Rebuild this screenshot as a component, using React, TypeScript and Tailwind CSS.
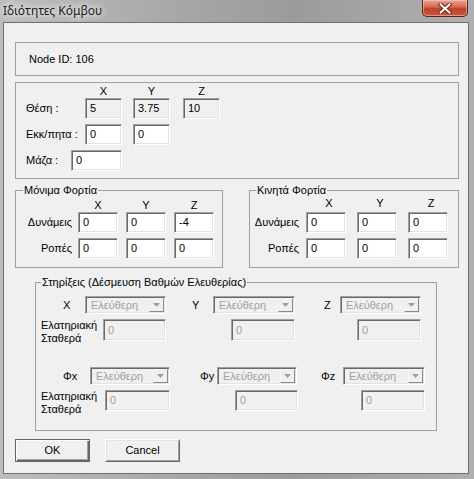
import type { ReactNode } from "react";

const SANS = "font-['Liberation_Sans',Arial,sans-serif]";

const SUNKEN =
  "border border-t-[#a0a0a0] border-l-[#a0a0a0] border-b-white border-r-white shadow-[inset_1px_1px_0_#696969,inset_-1px_-1px_0_#e3e3e3]";

function Field({
  value,
  className,
  tone = "white",
}: {
  value: string;
  className: string;
  tone?: "white" | "ro" | "off";
}) {
  const look =
    tone === "white"
      ? "bg-white text-black"
      : tone === "ro"
        ? "bg-[#f0f0f0] text-black"
        : "bg-[#f0f0f0] text-[#a0a0a0]";
  return (
    <div className={"flex shrink-0 items-center pl-[4px] " + SUNKEN + " " + look + " " + className}>
      {value}
    </div>
  );
}

function Combo({ className }: { className: string }) {
  return (
    <div className={"flex h-[18px] shrink-0 items-stretch bg-[#f0f0f0] p-[1px] " + SUNKEN + " " + className}>
      <span className="flex-1 pl-[4px] leading-[14px] text-[#a0a0a0]">Ελεύθερη</span>
      <span className="flex w-[15px] items-center justify-center border border-t-[#f4f4f4] border-l-[#f4f4f4] border-b-[#8a8a8a] border-r-[#8a8a8a] bg-[#f0f0f0]">
        <svg width="7" height="4" viewBox="0 0 7 4">
          <path d="M0 0 L7 0 L3.5 4 Z" fill="#a0a0a0" />
        </svg>
      </span>
    </div>
  );
}

function Group({
  title,
  className,
  legendClass,
  children,
}: {
  title: string;
  className: string;
  legendClass: string;
  children: ReactNode;
}) {
  return (
    <fieldset className={"m-0 shrink-0 border border-[#a0a0a0] p-0 " + className}>
      <legend className={"px-[1px] leading-[13px] " + legendClass}>{title}</legend>
      {children}
    </fieldset>
  );
}

function CloseButton() {
  return (
    <div className="mr-[6px] flex h-[17px] w-[46px] items-center justify-center rounded-b-[5px] border border-t-0 border-[#5e2418] bg-[linear-gradient(to_bottom,#e9a897,#d4644d_45%,#c0412a_55%,#c9573f)] shadow-[inset_0_0_0_1px_rgba(255,210,200,0.5)]">
      <svg width="14" height="11" viewBox="0 0 14 11">
        <path d="M2.5 1.5 L11.5 9.5 M11.5 1.5 L2.5 9.5" stroke="#6a2415" strokeWidth="4" strokeLinecap="square" />
        <path d="M2.5 1.5 L11.5 9.5 M11.5 1.5 L2.5 9.5" stroke="#ffffff" strokeWidth="2" strokeLinecap="square" />
      </svg>
    </div>
  );
}

export default function App() {
  return (
    <div
      className={
        "flex h-[479px] w-[474px] flex-col overflow-hidden bg-[linear-gradient(to_right,#bdbdbd,#a6a6a6_40%,#9b9b9b_62%,#b0b0b0)] text-[11px] text-black " +
        SANS
      }
    >
      {/* title bar */}
      <div className="flex h-[22px] shrink-0 items-start justify-between">
        <span className="ml-[3px] mt-[3px] font-['Noto_Sans','Open_Sans',sans-serif] text-[12px] leading-[16px] text-[#1b1b1b] [text-shadow:0_0_6px_#fff,0_0_10px_#fff]">
          Ιδιότητες Κόμβου
        </span>
        <CloseButton />
      </div>

      {/* client area */}
      <div className="ml-[3px] flex h-[452px] w-[466px] shrink-0 flex-col border border-[#6f6f6f] bg-[#f0f0f0]">
        <div className="ml-[11px] mt-[19px] flex h-[34px] w-[444px] shrink-0 items-center border border-[#a0a0a0] pl-[13px]">
          Node ID: 106
        </div>

        {/* position */}
        <div className="ml-[11px] mt-[6px] h-[97px] w-[444px] shrink-0 border border-[#a0a0a0]">
          <div className="mt-[2px] flex h-[13px] leading-[13px]">
            <span className="w-[69px] shrink-0" />
            <span className="w-[37px] text-center">X</span>
            <span className="ml-[11px] w-[37px] text-center">Y</span>
            <span className="ml-[13px] w-[37px] text-center">Z</span>
          </div>
          <div className="flex h-[21px] items-center">
            <span className="w-[69px] shrink-0 pl-[10px]">Θέση :</span>
            <Field value="5" tone="ro" className="h-[21px] w-[37px]" />
            <Field value="3.75" tone="ro" className="ml-[11px] h-[21px] w-[37px]" />
            <Field value="10" tone="ro" className="ml-[13px] h-[21px] w-[37px]" />
          </div>
          <div className="mt-[5px] flex h-[21px] items-center">
            <span className="w-[69px] shrink-0 pl-[10px]">Εκκ/πητα :</span>
            <Field value="0" className="h-[21px] w-[37px]" />
            <Field value="0" className="ml-[11px] h-[21px] w-[37px]" />
          </div>
          <div className="mt-[5px] flex h-[21px] items-center">
            <span className="w-[55px] shrink-0 pl-[10px]">Μάζα :</span>
            <Field value="0" className="h-[21px] w-[51px]" />
          </div>
        </div>

        {/* loads */}
        <div className="ml-[11px] mt-[5px] flex gap-[26px]">
          <Group title="Μόνιμα Φορτία" className="h-[84px] w-[208px]" legendClass="ml-[7px]">
            <div className="mt-[2px] flex h-[13px] leading-[13px]">
              <span className="w-[62px] shrink-0" />
              <span className="w-[40px] text-center">X</span>
              <span className="ml-[8px] w-[40px] text-center">Y</span>
              <span className="ml-[8px] w-[40px] text-center">Z</span>
            </div>
            <div className="flex h-[21px] items-center">
              <span className="w-[56px] shrink-0 text-right">Δυνάμεις</span>
              <Field value="0" className="ml-[6px] h-[21px] w-[40px]" />
              <Field value="0" className="ml-[8px] h-[21px] w-[40px]" />
              <Field value="-4" className="ml-[8px] h-[21px] w-[40px]" />
            </div>
            <div className="mt-[5px] flex h-[21px] items-center">
              <span className="w-[56px] shrink-0 text-right">Ροπές</span>
              <Field value="0" className="ml-[6px] h-[21px] w-[40px]" />
              <Field value="0" className="ml-[8px] h-[21px] w-[40px]" />
              <Field value="0" className="ml-[8px] h-[21px] w-[40px]" />
            </div>
          </Group>
          <Group title="Κινητά Φορτία" className="h-[84px] w-[210px]" legendClass="ml-[6px]">
            <div className="flex h-[13px] leading-[13px]">
              <span className="w-[56px] shrink-0" />
              <span className="w-[40px] pl-[6px] text-center">X</span>
              <span className="ml-[11px] w-[40px] pl-[6px] text-center">Y</span>
              <span className="ml-[11px] w-[40px] pl-[6px] text-center">Z</span>
            </div>
            <div className="mt-[2px] flex h-[21px] items-center">
              <span className="w-[49px] shrink-0 text-right">Δυνάμεις</span>
              <Field value="0" className="ml-[7px] h-[21px] w-[40px]" />
              <Field value="0" className="ml-[11px] h-[21px] w-[40px]" />
              <Field value="0" className="ml-[11px] h-[21px] w-[40px]" />
            </div>
            <div className="mt-[5px] flex h-[21px] items-center">
              <span className="w-[49px] shrink-0 text-right">Ροπές</span>
              <Field value="0" className="ml-[7px] h-[21px] w-[40px]" />
              <Field value="0" className="ml-[11px] h-[21px] w-[40px]" />
              <Field value="0" className="ml-[11px] h-[21px] w-[40px]" />
            </div>
          </Group>
        </div>

        {/* supports */}
        <Group
          title="Στηρίξεις (Δέσμευση Βαθμών Ελευθερίας)"
          className="ml-[31px] mt-[8px] h-[155px] w-[402px]"
          legendClass="ml-[5px]"
        >
          <div className="mt-[7px] flex h-[18px] items-center">
            <span className="ml-[27px] w-[22px] shrink-0">X</span>
            <Combo className="w-[81px]" />
            <span className="ml-[26px] w-[21px] shrink-0">Y</span>
            <Combo className="w-[82px]" />
            <span className="ml-[29px] w-[16px] shrink-0">Z</span>
            <Combo className="w-[81px]" />
          </div>
          <div className="mt-[5px] flex items-start">
            <span className="ml-[5px] w-[62px] shrink-0 leading-[13px]">
              Ελατηριακή
              <br />
              Σταθερά
            </span>
            <Field value="0" tone="off" className="h-[22px] w-[63px]" />
            <Field value="0" tone="off" className="ml-[65px] h-[22px] w-[64px]" />
            <Field value="0" tone="off" className="ml-[62px] h-[22px] w-[64px]" />
          </div>
          <div className="mt-[22px] flex h-[18px] items-center">
            <span className="ml-[27px] w-[27px] shrink-0">Φx</span>
            <Combo className="w-[80px]" />
            <span className="ml-[30px] w-[17px] shrink-0">Φy</span>
            <Combo className="w-[80px]" />
            <span className="ml-[24px] w-[22px] shrink-0">Φz</span>
            <Combo className="w-[82px]" />
          </div>
          <div className="mt-[5px] flex items-start">
            <span className="ml-[5px] w-[64px] shrink-0 leading-[13px]">
              Ελατηριακή
              <br />
              Σταθερά
            </span>
            <Field value="0" tone="off" className="h-[21px] w-[65px]" />
            <Field value="0" tone="off" className="ml-[65px] h-[21px] w-[63px]" />
            <Field value="0" tone="off" className="ml-[63px] h-[21px] w-[64px]" />
          </div>
        </Group>

        {/* buttons */}
        <div className="ml-[11px] mt-[8px] flex gap-[15px]">
          <button
            type="button"
            className="h-[23px] w-[75px] border border-[#646464] bg-[#f0f0f0] shadow-[inset_1px_1px_0_#fff,inset_-1px_-1px_0_#696969,inset_-2px_-2px_0_#a0a0a0]"
          >
            OK
          </button>
          <button
            type="button"
            className="h-[23px] w-[75px] border border-t-white border-l-white border-b-[#696969] border-r-[#696969] bg-[#f0f0f0] shadow-[inset_1px_1px_0_#e3e3e3,inset_-1px_-1px_0_#a0a0a0]"
          >
            Cancel
          </button>
        </div>
      </div>
    </div>
  );
}
